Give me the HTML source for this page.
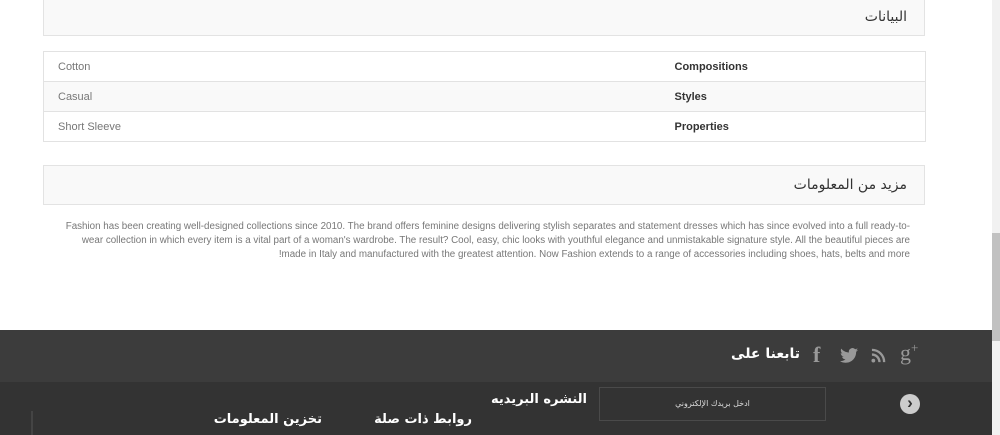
<!DOCTYPE html>
<html><head><meta charset="utf-8"><style>
*{margin:0;padding:0;box-sizing:border-box}
body{width:1000px;height:435px;overflow:hidden;background:#fff;position:relative;font-family:"Liberation Sans",Arial,sans-serif}
.ar{font-family:"DejaVu Sans","Noto Sans CJK SC",sans-serif}
.box{position:absolute;left:43px;width:882px;background:#f9f9f9;border:1px solid #e3e3e3}
.h{position:absolute;right:17px;font-size:14px;color:#333}
table{position:absolute;left:43px;top:51px;width:883px;border-collapse:collapse;font-size:11px}
td{border-top:1px solid #e2e2e2;border-bottom:1px solid #e2e2e2;height:30px;padding:0 14px;color:#777}
td:first-child{border-left:1px solid #e2e2e2}
td.b{font-weight:bold;color:#333;width:251px;padding-left:0;border-right:1px solid #e2e2e2}
tr:nth-child(2) td{background:#f9f9f9}
.txt{position:absolute;left:40px;top:220px;width:870px;font-size:9.8px;line-height:14px;color:#777;text-align:right;white-space:nowrap}
.f1{position:absolute;left:0;top:330px;width:992px;height:52px;background:#3c3c3c}
.f2{position:absolute;left:0;top:382px;width:992px;height:53px;background:#333}
.sb{position:absolute;left:992px;top:0;width:8px;height:435px;background:#f1f1f1}
.th{position:absolute;left:992px;top:233px;width:8px;height:108px;background:#c1c1c1}
.w{position:absolute;color:#fff;font-weight:bold;white-space:nowrap}
</style></head><body>
<div class="box" style="top:-1px;height:37px"><div class="h ar" style="top:9px">البيانات</div></div>
<table>
<tr><td>Cotton</td><td class="b">Compositions</td></tr>
<tr><td>Casual</td><td class="b">Styles</td></tr>
<tr><td>Short Sleeve</td><td class="b">Properties</td></tr>
</table>
<div class="box" style="top:165px;height:40px"><div class="h ar" style="top:11px">مزيد من المعلومات</div></div>
<div class="txt">Fashion has been creating well-designed collections since 2010. The brand offers feminine designs delivering stylish separates and statement dresses which has since evolved into a full ready-to-<br>wear collection in which every item is a vital part of a woman's wardrobe. The result? Cool, easy, chic looks with youthful elegance and unmistakable signature style. All the beautiful pieces are<br>!made in Italy and manufactured with the greatest attention. Now Fashion extends to a range of accessories including shoes, hats, belts and more</div>
<div class="f1"></div>
<div class="f2"></div>
<div class="w ar" style="right:200px;top:346px;font-size:14px">تابعنا على</div>
<div style="position:absolute;left:813px;top:342px;color:#999;font-size:22px;font-weight:bold;font-family:'Liberation Serif',serif">f</div>
<svg style="position:absolute;left:840px;top:348px" width="18" height="15" viewBox="0 0 24 20"><path fill="#999" d="M24 2.4c-.9.4-1.8.6-2.8.8 1-.6 1.8-1.6 2.2-2.7-1 .6-2 1-3.1 1.2A4.9 4.9 0 0 0 11.900 6C7.800 5.800 4.200 3.900 1.700.8c-1.300 2.300-.400 5 1.500 6.500-.8 0-1.600-.2-2.200-.6 0 2.400 1.700 4.400 3.900 4.800-.7.200-1.500.2-2.200.1.600 2 2.400 3.400 4.600 3.400A9.900 9.900 0 0 1 0 17.500 14 14 0 0 0 7.500 19.700c9.100 0 14-7.500 14-14v-.6c1-.7 1.800-1.600 2.500-2.700z"/></svg>
<svg style="position:absolute;left:871px;top:348px" width="15" height="15" viewBox="0 0 16 16"><circle cx="2.500" cy="13.500" r="2" fill="#999"/><path d="M1 7a8 8 0 0 1 8 8M1 2a13 13 0 0 1 13 13" stroke="#999" stroke-width="2.500" fill="none"/></svg>
<div style="position:absolute;left:900px;top:340px;color:#999;font-size:22px;font-family:'Liberation Serif',serif">g<span style="font-size:13px;vertical-align:top">+</span></div>
<div class="w ar" style="right:413px;top:392px;font-size:13px">النشره البريديه</div>
<div style="position:absolute;left:599px;top:387px;width:227px;height:34px;background:#333;border:1px solid #4a4a4a;color:#ddd;font-size:8px;text-align:center;line-height:32px" class="ar">ادخل بريدك الإلكتروني</div>
<div style="position:absolute;left:900px;top:394px;width:20px;height:20px;border-radius:50%;background:#ccc;color:#333;font-size:17px;font-weight:bold;text-align:center;line-height:18px">›</div>
<div class="w ar" style="right:528px;top:412px;font-size:13px">روابط ذات صلة</div>
<div class="w ar" style="right:678px;top:412px;font-size:13px">تخزين المعلومات</div>
<div style="position:absolute;left:31px;top:411px;width:2px;height:24px;background:#444"></div>
<div class="sb"></div><div class="th"></div>
</body></html>
